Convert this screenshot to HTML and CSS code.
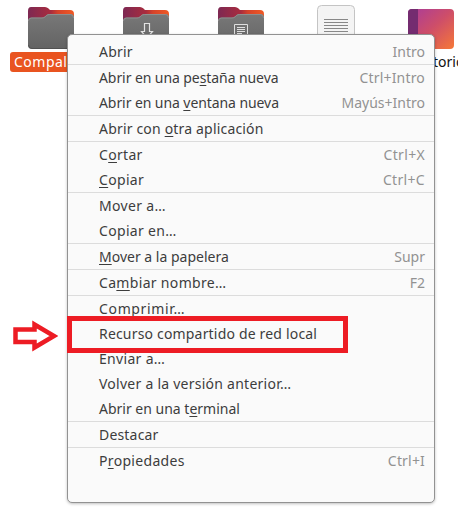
FILE: index.html
```
<!DOCTYPE html>
<html lang="es">
<head>
<meta charset="utf-8">
<title>Archivos</title>
<link rel="stylesheet" href="styles.css">
</head>
<body>
<svg class="defs" width="0" height="0" aria-hidden="true">
  <defs>
    <linearGradient id="back" x1="0" x2="1" y1="0" y2="0"><stop offset="0" stop-color="#7d2853"/><stop offset=".5" stop-color="#a92c3e"/><stop offset=".65" stop-color="#d5432b"/><stop offset="1" stop-color="#f05a24"/></linearGradient>
    <linearGradient id="front" x1="0" x2="0" y1="0" y2="1"><stop offset="0" stop-color="#787878"/><stop offset="1" stop-color="#636363"/></linearGradient>
    <linearGradient id="desk" x1="0" x2="1" y1="0" y2="1"><stop offset="0" stop-color="#a83b9c"/><stop offset=".5" stop-color="#ce4e69"/><stop offset="1" stop-color="#f67837"/></linearGradient>
    <symbol id="folder" viewBox="0 0 46 43">
      <path fill="url(#back)" d="M3 0H17Q19 0 20.500 1.500L22 3H42Q46 3 46 7V38H0V4Q0 0 3 0Z"/>
      <path fill="url(#front)" d="M0 14Q0 10.500 3.500 10.500H14Q16 10.500 17.500 9L18.500 8Q19.500 7 21.500 7H42.500Q46 7 46 10.500V38Q46 42 42 42H4Q0 42 0 38Z"/>
      <path fill="none" stroke="#969696" stroke-width=".8" d="M.5 14Q.5 11 3.500 11H14Q16 11 17.500 9.500L18.500 8.500Q19.500 7.500 21.500 7.500H42.500Q45.500 7.500 45.500 11"/>
      <path fill="none" stroke="#4d4d4d" stroke-width=".8" d="M.5 38Q.5 41.500 4 41.500H42Q45.500 41.500 45.500 38"/>
    </symbol>
  </defs>
</svg>
<main class="desktop">
  <section class="files">
    <div class="file"><svg class="icon"><use href="#folder"/></svg><span class="label selected">Compal</span></div>
    <div class="file"><svg class="icon"><use href="#folder"/><path d="M21.500 16.500H26.500V24.500H29.500L24 31 18.500 24.500H21.500Z" fill="none" stroke="#e2e2e2" stroke-width="1.200"/></svg></div>
    <div class="file"><svg class="icon"><use href="#folder"/><path d="M16.500 17.500H29.500V31H16.500ZM19 20.500H27M19 22.500H27M19 24.500H27M19 26.500H24" fill="none" stroke="#dedede"/></svg></div>
    <div class="file paper"><svg width="38" height="46"><rect x=".5" y=".5" width="37" height="45" rx="4" fill="#f4f4f4" stroke="#c4c4c4"/><path d="M7 14.500H31M7 17.500H31M7 20.500H31M7 23.500H31M7 26.500H31" stroke="#888"/></svg></div>
    <div class="file desk"><svg width="46" height="40"><rect width="46" height="40" rx="4" fill="url(#desk)"/><path d="M4 0H10V40H4Q0 40 0 36V4Q0 0 4 0Z" fill="#742c70"/></svg><span class="label">torio</span></div>
  </section>
  <nav class="menu">
    <ul><li><span class="wide">Abrir</span><kbd>Intro</kbd></li></ul>
    <ul><li><span class="tight">Abrir en una pe<u>s</u>taña nueva</span><kbd class="wide">Ctrl+Intro</kbd></li><li><span class="tight">Abrir en una <u>v</u>entana nueva</span><kbd>Mayús+Intro</kbd></li></ul>
    <ul><li><span class="wide">Abrir con <u>o</u>tra aplicación</span></li></ul>
    <ul><li><span class="wider">C<u>o</u>rtar</span><kbd class="wider">Ctrl+X</kbd></li><li><span class="wider"><u>C</u>opiar</span><kbd class="wider">Ctrl+C</kbd></li></ul>
    <ul><li><span class="wider">Mover a…</span></li><li><span class="wider">Copiar en…</span></li></ul>
    <ul><li><span><u>M</u>over a la papelera</span><kbd>Supr</kbd></li></ul>
    <ul><li><span class="wider">Ca<u>m</u>biar nombre…</span><kbd>F2</kbd></li></ul>
    <ul><li><span class="widest">C<u>o</u>mprimir…</span></li><li><span class="wide">Recurso compartido de red local</span></li><li><span class="wider">Enviar a…</span></li><li><span class="volver">Volver a la versión anterior…</span></li><li><span>Abrir en una t<u>e</u>rminal</span></li></ul>
    <ul><li><span class="wide">Destacar</span></li></ul>
    <ul><li><span class="wider">P<u>r</u>opiedades</span><kbd class="wide">Ctrl+I</kbd></li></ul>
  </nav>
  <div class="highlight"></div>
  <svg class="arrow" width="46" height="32"><path d="M3.500 9.500H22.500V4.500L42 16 22.500 27.500V22H3.500Z" fill="#fff" stroke="#ed1c24" stroke-width="4.500"/></svg>
</main>
</body>
</html>
```
FILE: styles.css
```
* { box-sizing: border-box; }
body { margin: 0; background: #fff; font: 14px/25px "Noto Sans", sans-serif; color: #3d3d3d; }
.defs { position: absolute; }
.desktop { position: relative; width: 458px; height: 532px; overflow: hidden; }
.files { display: grid; grid-template-columns: repeat(4, 95px) 46px; padding: 7px 0 0 28px; }
.file { position: relative; height: 66px; }
.file svg { display: block; }
.icon { width: 46px; height: 43px; }
.icon use { width: 46px; height: 43px; }
.paper { padding: 0 0 0 4px; margin-top: -2px; }
.desk { padding-top: 2px; }
.label { position: absolute; top: 45px; left: 5px; height: 20px; line-height: 20px; color: #111; white-space: nowrap; }
.desk .label { left: 25px; }
.selected { left: -18px; width: 82px; padding: 0 4px; border-radius: 3px; background: #e95420; color: #fff; letter-spacing: .5px; }
.menu { position: absolute; left: 67px; top: 34px; width: 368px; height: 469px; padding-top: 4px; background: #fafafa; border: 1px solid #929292; border-radius: 5px; box-shadow: 0 1px 3px rgba(0,0,0,.25); }
.menu ul { list-style: none; margin: 0; padding: 0; }
.menu ul + ul { border-top: 1px solid #dcdcdc; }
.menu li { display: flex; justify-content: space-between; height: 25px; padding: 0 9px 0 31px; white-space: nowrap; }
.menu kbd { font: inherit; color: #929292; }
.menu u { text-decoration-thickness: 1px; text-underline-offset: 2px; text-decoration-skip-ink: none; }
.wide { letter-spacing: .18px; }
.wider { letter-spacing: .32px; }
.widest { letter-spacing: .65px; }
.volver { letter-spacing: .25px; }
.tight { letter-spacing: -.08px; }
.highlight { position: absolute; left: 67px; top: 316px; width: 281px; height: 37px; border: 5px solid #ed1c24; }
.arrow { position: absolute; left: 12px; top: 320px; }
```
